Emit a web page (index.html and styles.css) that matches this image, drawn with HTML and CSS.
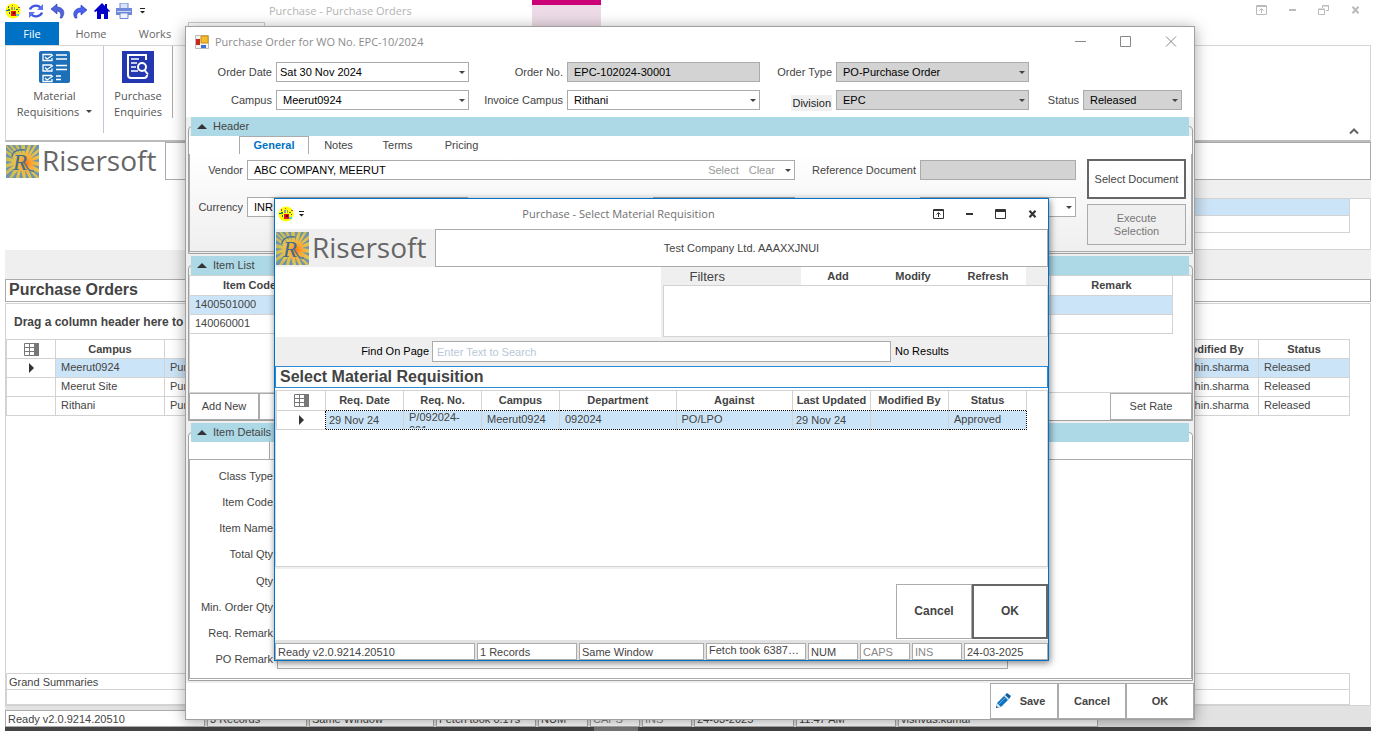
FILE: index.html
```html
<!DOCTYPE html>
<html lang="en">
<head>
<meta charset="utf-8">
<title>Purchase - Purchase Orders</title>
<link rel="stylesheet" href="styles.css">
</head>
<body>
<svg class="defs" aria-hidden="true">
  <radialGradient id="sun" cx="62%" cy="55%" r="62%">
    <stop offset="0" stop-color="#ff7a1c"/><stop offset=".3" stop-color="#f9ab3a"/><stop offset=".62" stop-color="#e3c44c"/><stop offset="1" stop-color="#c9bb58"/>
  </radialGradient>
  <symbol id="logo" viewBox="0 0 33 33">
    <rect width="33" height="33" fill="url(#sun)"/>
    <g fill="#6f93ad">
      <path d="M0 0h3l9 11zM6 0h3l5 9zM12 0h3l1 9zM19 0h3l-3 9zM25 0h3l-6 10zM31 0h2v3l-9 8zM33 7v3l-8 3zM33 14v3l-7-1zM33 21v3l-7-4zM33 28v4l-9-8zM30 33h-4l-4-9zM23 33h-3l-1-8zM17 33h-4l2-8zM10 33H6l6-8zM3 33H0v-3l9-7zM0 26v-3l8-3zM0 19v-3l7 1zM0 12V8l8 6zM0 5V2l9 9z"/>
    </g>
    <text x="7" y="25" class="logo-letter">R</text>
    <path d="M6 12c0-6 7-8 13-7M18 17c3 4 4 10 10 9" fill="none" stroke="#4c7391" stroke-width="1.4"/>
  </symbol>
  <symbol id="app" viewBox="0 0 16 16">
    <circle cx="8" cy="8" r="7.6" fill="#ff0"/>
    <path d="M6 8h5v5H6z" fill="#e01818"/><path d="M6 4h2v3H6zM9 4h1v3H9z" fill="#999"/>
    <path d="M1 7h2v1H1zM3 4h1v1H3zM4 9h1v2H4zM13 8h1v1h-1z" fill="#1656c8"/>
    <path d="M13 4h2v1h-2zM3 3h1v1H3zM7 2h1v1H7z" fill="#d33"/>
    <path d="M3 6h2v2H3zM11 6h2v1h-2z" fill="#2a8a3a"/><path d="M11 11h3v2h-3z" fill="#4bd0e8"/><path d="M8 9h2v2H8z" fill="#700"/>
  </symbol>
  <symbol id="qat" viewBox="0 0 5 6"><path d="M0 0h5v1H0zM0 3h5L2.500 5.500z" fill="#222"/></symbol>
  <symbol id="pin" viewBox="0 0 11 10"><path d="M.5.500h10v9H.5zM0 1.500h11M5.500 8V4M3.500 5.500l2-2 2 2" fill="none" stroke="currentColor"/></symbol>
  <symbol id="cross" viewBox="0 0 9 8"><path d="M1.500.800l6 6.400M7.500.800l-6 6.400" stroke="currentColor" stroke-width="2.100" fill="none"/></symbol>
  <symbol id="chooser" viewBox="0 0 15 13"><path d="M.5.500h10v12H.5zM0 4.500h10M0 8.500h10M5.500 0v13" fill="none" stroke="#777"/><path d="M10 0h5v13h-5z" fill="#777"/></symbol>
</svg>

<div class="desktop">
  <main class="app">
    <header class="app-title">
      <div class="qat">
        <svg class="qat-app" width="16" height="16"><use href="#app"/></svg>
        <svg width="16" height="16" viewBox="0 0 16 16" fill="none" stroke="#3f55e0" stroke-width="2.400"><path d="M2 6.500C3 3 9 1 12.500 4.500M14 9.500C13 13 7 15 3.500 11.500"/><path d="M15 1v6H9zM1 15V9h6z" fill="#5d74ee" stroke="none"/></svg>
        <svg width="16" height="16" viewBox="0 0 16 16"><path d="M1 6l6-5v3c6 0 9 5 5 11h-2c2-4 0-7-3-7v3z" fill="#5264dc" stroke="#2434ac" stroke-width=".6"/></svg>
        <svg width="16" height="16" viewBox="0 0 16 16"><path d="M15 7L9 2v3C3 5 0 10 3 15h2C4 11 6 9 9 9v3z" fill="#4a60f0" stroke="#2434ac" stroke-width=".6"/></svg>
        <svg width="16" height="16" viewBox="0 0 16 16"><path d="M8 0L0 8l1 1 2-1v8h4v-5h3v5h4V8l1 1 1-1-3-3V1h-2v2z" fill="#0000c8"/></svg>
        <svg width="16" height="16" viewBox="0 0 16 16"><path d="M4 0h8v6H4z" fill="#d9e4fb" stroke="#6d86d8"/><path d="M0 5h16v7H0z" fill="#7088da"/><path d="M1 8h14v1H1z" fill="#c9d6f6"/><path d="M4 10h8v5.500H4z" fill="#eef3fd" stroke="#6d86d8"/></svg>
        <svg class="qat-more" width="5" height="6"><use href="#qat"/></svg>
      </div>
      <h1 class="caption">Purchase - Purchase Orders</h1>
      <div class="context-tab"></div>
      <div class="app-controls">
        <svg width="11" height="10"><use href="#pin"/></svg>
        <svg width="7" height="10"><path d="M0 4h7v2H0z" fill="currentColor"/></svg>
        <svg width="11" height="10" viewBox="0 0 11 10" fill="none" stroke="currentColor"><path d="M.5 4.500h6v5h-6zM0 4h7M4.500 3V.500h6v5H8M4 1h7"/></svg>
        <svg width="9" height="8"><use href="#cross"/></svg>
      </div>
    </header>
    <nav class="ribbon-tabs">
      <button class="file-tab">File</button>
      <button>Home</button>
      <button>Works</button>
      <span class="ribbon-active"></span>
    </nav>
    <section class="ribbon">
      <button class="ribbon-item material">
        <svg width="31" height="32" viewBox="0 0 31 32"><rect width="31" height="32" rx="2" fill="#1d6fb8"/><g fill="none" stroke="#fff" stroke-width="1.300"><path d="M13 3.500H4v6h9V7M13 14H4v6h9v-2.500M13 24.500H4v6h9V28"/><path d="M6 6l2 2 6-4M6 16.500l2 2 6-4M6 27l2 2 6-4M17 4h11M17 8h11M17 14.500h11M17 18.500h11M17 25h5M17 28.500h5"/></g></svg>
        <span>Material<br>Requisitions <i class="caret"></i></span>
      </button>
      <button class="ribbon-item enquiries">
        <svg width="32" height="32" viewBox="0 0 32 32"><path d="M0 0h32v32H0z" fill="#2337b0"/><g fill="none" stroke="#fff" stroke-width="2"><path d="M24 9V4H6v20q0 3 3 3h13q3 0 3-3"/><path d="M9 8h8M9 12h6M9 16h5M9 20h7" stroke-width="1.500"/><circle cx="20" cy="16" r="4"/><path d="M22.500 19l3.500 4.500"/></g></svg>
        <span>Purchase<br>Enquiries</span>
      </button>
      <button class="ribbon-collapse" aria-label="Collapse ribbon"><svg width="10" height="7" viewBox="0 0 10 7"><path d="M1 5.500l4-4 4 4" fill="none" stroke="#666" stroke-width="2"/></svg></button>
    </section>
    <section class="brand">
      <div class="brand-logo"><svg width="33" height="33"><use href="#logo"/></svg><span>Risersoft</span></div>
      <div class="company"></div>
    </section>
    <section class="app-filters">
      <div class="blank"></div>
      <div class="filter-list"><div class="filter-row selected"></div><div class="filter-row"></div></div>
    </section>
    <h2 class="view-title">Purchase Orders</h2>
    <section class="orders">
      <p class="group-hint">Drag a column header here to group by that column.</p>
      <table class="grid">
        <colgroup><col class="w-49"><col class="w-109"><col><col class="w-92"><col class="w-91"></colgroup>
        <thead><tr><th><svg width="15" height="13"><use href="#chooser"/></svg></th><th>Campus</th><th></th><th>Modified By</th><th>Status</th></tr></thead>
        <tbody>
          <tr class="current"><td class="mark"><i></i></td><td>Meerut0924</td><td>Purchase</td><td class="user">sachin.sharma</td><td>Released</td></tr>
          <tr><td></td><td>Meerut Site</td><td>Purchase</td><td class="user">sachin.sharma</td><td>Released</td></tr>
          <tr><td></td><td>Rithani</td><td>Purchase</td><td class="user">sachin.sharma</td><td>Released</td></tr>
        </tbody>
      </table>
      <div class="summaries"><div>Grand Summaries</div><div></div></div>
    </section>
    <footer class="statusbar">
      <span class="w-200">Ready v2.0.9214.20510</span><span class="w-100">3 Records</span><span class="w-125">Same Window</span><span class="w-100">Fetch took 0.17s</span><span class="w-50">NUM</span><span class="w-50 off">CAPS</span><span class="w-50 off">INS</span><span class="w-100">24-03-2025</span><span class="w-100">11:47 AM</span><span class="w-200">vishvas.kumar</span>
    </footer>
    <div class="taskbar"><span></span></div>
  </main>

  <section class="window order-window">
    <header class="order-title">
      <svg width="14" height="14" viewBox="0 0 14 14"><path d="M.5.500h13v13H.5z" fill="#f4f4f4" stroke="#bbb"/><path d="M1 4h4v6H1z" fill="#c8281c"/><path d="M6 1h7v7H6z" fill="#f5bd2e" stroke="#c98d0c"/><path d="M6 10h5v3H6z" fill="#3d6fd6"/></svg>
      <h2 class="caption">Purchase Order for WO No. EPC-10/2024</h2>
      <div class="order-controls">
        <svg width="11" height="12"><path d="M0 5.500h11" stroke="currentColor"/></svg>
        <svg width="11" height="12" fill="none"><path d="M.5.500h10v10H.5z" stroke="currentColor"/></svg>
        <svg width="12" height="12"><path d="M1 .5l10 10M11 .5L1 10.500" stroke="currentColor"/></svg>
      </div>
    </header>
    <form class="order-head">
      <label for="odate">Order Date</label><span class="drop tight"><select id="odate"><option>Sat 30 Nov 2024</option></select></span>
      <label for="ono">Order No.</label><input id="ono" class="ro" value="EPC-102024-30001" readonly>
      <label for="otype">Order Type</label><span class="drop"><select id="otype" class="ro"><option>PO-Purchase Order</option></select></span>
      <i></i><i></i>
      <label for="campus">Campus</label><span class="drop"><select id="campus"><option>Meerut0924</option></select></span>
      <label for="icampus">Invoice Campus</label><span class="drop"><select id="icampus"><option>Rithani</option></select></span>
      <label for="division" class="plain"><span>Division</span></label><span class="drop"><select id="division" class="ro"><option>EPC</option></select></span>
      <label for="status">Status</label><span class="drop"><select id="status" class="ro"><option>Released</option></select></span>
    </form>

    <section class="group head-group">
      <button class="group-bar"><i></i>Header</button>
      <div class="group-body">
        <nav class="tabs"><button class="active">General</button><button>Notes</button><button>Terms</button><button>Pricing</button></nav>
        <div class="page general">
          <form class="fields">
            <label for="vendor">Vendor</label>
            <div class="vendor"><input id="vendor" value="ABC COMPANY, MEERUT"><a href="#">Select</a><a href="#">Clear</a><i class="caret"></i></div>
            <label for="refdoc">Reference Document</label><input id="refdoc" class="ro" readonly>
            <label for="currency">Currency</label><span class="drop"><select id="currency"><option>INR</option></select></span>
            <i></i><input class="ro" aria-label="Rate" readonly><i></i><span class="drop"><select aria-label="Terms"><option></option></select></span>
          </form>
          <div class="doc-buttons"><button class="btn primary">Select Document</button><button class="btn dim">Execute Selection</button></div>
        </div>
      </div>
    </section>

    <section class="group list-group">
      <button class="group-bar"><i></i>Item List</button>
      <div class="group-body">
        <div class="list">
          <table class="grid">
            <colgroup><col class="w-120"><col><col class="w-122"></colgroup>
            <thead><tr><th>Item Code</th><th></th><th>Remark</th></tr></thead>
            <tbody><tr class="current"><td>1400501000</td><td></td><td></td></tr><tr><td>140060001</td><td></td><td></td></tr></tbody>
          </table>
        </div>
        <div class="list-actions"><button class="btn add">Add New</button><button class="btn del">Delete</button><button class="btn rate">Set Rate</button></div>
      </div>
    </section>

    <section class="group detail-group">
      <button class="group-bar"><i></i>Item Details</button>
      <div class="group-body">
        <div class="detail-tab"></div>
        <form class="page details">
          <label for="d1">Class Type</label><input id="d1">
          <label for="d2">Item Code</label><input id="d2">
          <label for="d3">Item Name</label><input id="d3">
          <label for="d4">Total Qty</label><input id="d4">
          <label for="d5">Qty</label><input id="d5">
          <label for="d6">Min. Order Qty</label><input id="d6">
          <label for="d7">Req. Remark</label><input id="d7">
          <label for="d8">PO Remark</label><input id="d8">
        </form>
      </div>
    </section>

    <footer class="order-actions">
      <button class="btn save"><svg width="16" height="16" viewBox="0 0 16 16"><path d="M1 15l1-5 8-8 4 4-8 8z" fill="#1173bd"/><path d="M10 2l2-2 4 3-2 3z" fill="#0f5d9c"/><path d="M9 3l1-1 4 4-1 1zM1 15l1-5 4 4z" fill="#dceaf5"/><path d="M1 15l.5-2 1.500 1.500z" fill="#123"/><path d="M4 11l7-7" stroke="#69b1e4"/></svg>Save</button><button class="btn">Cancel</button><button class="btn">OK</button>
    </footer>
  </section>

  <section class="window pick-window">
    <header class="pick-title">
      <svg width="16" height="16"><use href="#app"/></svg>
      <svg class="qat-more" width="5" height="6"><use href="#qat"/></svg>
      <h2 class="caption">Purchase - Select Material Requisition</h2>
      <div class="pick-controls">
        <svg width="11" height="10"><use href="#pin"/></svg>
        <svg width="7" height="10"><path d="M0 4h7v2H0z" fill="currentColor"/></svg>
        <svg width="11" height="10" fill="none" stroke="currentColor"><path d="M.5.500h10v9H.5zM0 1.500h11M0 2.500h11"/></svg>
        <svg width="9" height="8"><use href="#cross"/></svg>
      </div>
    </header>
    <section class="brand">
      <div class="brand-logo"><svg width="33" height="33"><use href="#logo"/></svg><span>Risersoft</span></div>
      <div class="company">Test Company Ltd. AAAXXJNUI</div>
    </section>
    <section class="pick-filters">
      <div class="blank"></div>
      <div class="filter-side">
        <div class="filter-bar"><span>Filters</span><button>Add</button><button>Modify</button><button>Refresh</button></div>
        <div class="filter-box"></div>
      </div>
    </section>
    <div class="find"><label for="find">Find On Page</label><input id="find" placeholder="Enter Text to Search"><span>No Results</span></div>
    <h2 class="view-title">Select Material Requisition</h2>
    <section class="pick-grid">
      <table class="grid">
        <colgroup><col class="w-49"><col class="w-78"><col class="w-78"><col class="w-78"><col><col><col class="w-78"><col class="w-78"><col class="w-78"></colgroup>
        <thead><tr><th><svg width="15" height="13"><use href="#chooser"/></svg></th><th>Req. Date</th><th>Req. No.</th><th>Campus</th><th>Department</th><th>Against</th><th>Last Updated</th><th>Modified By</th><th>Status</th></tr></thead>
        <tbody><tr class="current focus"><td class="mark"><i></i></td><td class="date first">29 Nov 24</td><td><div class="wrap">P/092024-<br>001</div></td><td>Meerut0924</td><td>092024</td><td>PO/LPO</td><td class="date">29 Nov 24</td><td></td><td>Approved</td></tr></tbody>
      </table>
    </section>
    <div class="pick-actions"><button class="btn">Cancel</button><button class="btn primary">OK</button></div>
    <footer class="statusbar">
      <span class="w-200">Ready v2.0.9214.20510</span><span class="w-100">1 Records</span><span class="w-125">Same Window</span><span class="w-100 raised">Fetch took 6387…</span><span class="w-50">NUM</span><span class="w-50 off">CAPS</span><span class="w-50 off">INS</span><span class="rest">24-03-2025</span>
    </footer>
  </section>
</div>
</body>
</html>
```

FILE: styles.css
```css
* { box-sizing: border-box; }
body { margin: 0; background: #fff; color: #444; font: 11px/13px "Liberation Sans", Arial, sans-serif; }
h1, h2, p { margin: 0; }
button, input, select { font: inherit; color: inherit; margin: 0; border-radius: 0; }
button { background: none; border: 0; padding: 0; }
a { color: #999; text-decoration: none; }
svg { display: block; flex: none; }
.defs { position: absolute; width: 0; height: 0; }
.logo-letter { font: italic 23px "Liberation Serif", serif; fill: #3f6d90; }

.desktop { position: relative; min-height: 100vh; overflow: hidden; }
.caption { font: 11px/16px "Open Sans", "Noto Sans", sans-serif; color: #8c8c8c; white-space: nowrap; }
.caret { display: inline-block; border: 3px solid transparent; border-top-color: #444; border-bottom: 0; }

/* main application window */
.app { display: flex; flex-direction: column; min-height: 100vh; padding: 0 10px 0 5px; }
.app-title { display: flex; height: 22px; align-items: center; }
.qat { display: flex; gap: 6px; align-items: center; width: 264px; }
.qat-app { margin-right: 1px; }
.qat .qat-more { margin-left: 2px; }
.app-title .caption { width: 263px; color: #b4b4b4; }
.context-tab { align-self: flex-start; width: 69px; height: 26px; margin-bottom: -4px; background: #ecdbe6; border-top: 5px solid #cc0077; }
.app-controls { display: flex; align-items: center; gap: 22px; margin: 0 11px 2px auto; color: #bbb; }
.ribbon-tabs { display: flex; height: 23px; font: 11px/23px "Open Sans", "Noto Sans", sans-serif; color: #666; }
.ribbon-tabs button { width: 64px; }
.ribbon-tabs .file-tab { width: 54px; background: #0072c6; color: #fff; }
.ribbon-active { width: 77px; margin-left: 1px; border: 1px solid #ccc; border-bottom: 0; }
.ribbon { display: flex; height: 97px; border: 1px solid #d5d5d5; border-bottom: 2px solid #bbb; align-items: flex-start; }
.ribbon-item { display: flex; flex-direction: column; align-items: center; gap: 5px; padding-top: 5px; font: 11px/16px "Open Sans", "Noto Sans", sans-serif; color: #555; white-space: nowrap; }
.ribbon-item .caret { margin: 0 0 3px 4px; }
.material { width: 98px; border-right: 1px solid #c5c5d8; height: 87px; }
.enquiries { width: 69px; border-right: 1px solid #aaa; height: 72px; }
.ribbon-collapse { margin: 82px 11px 0 auto; }
.brand { display: flex; height: 38px; }
.brand-logo { display: flex; align-items: center; gap: 3px; width: 160px; padding-left: 1px; color: #666; font: 28px/32px "Open Sans", sans-serif; white-space: nowrap; }
.brand-logo span { margin-top: -3px; }
.company { flex: 1; display: flex; align-items: center; justify-content: center; border: 1px solid #ababab; }
.app-filters { display: flex; height: 99px; background: #efefef; }
.blank { flex: 1; background: #fff; }
.app-filters .blank { height: 70px; }
.filter-list { flex: 1; height: 52px; margin-top: 18px; border: 1px solid #d3d3d3; background: #fff; padding-right: 20px; }
.filter-row { height: 17px; border: 1px solid #d3d3d3; border-top: 0; border-left: 0; }
.filter-row.selected, .grid .current td { background: #cce4f7; }
.view-title { height: 23px; border: 1px solid #ababab; padding-left: 3px; font: bold 16px/20px "Liberation Sans", Arial, sans-serif; }
.orders { flex: 1; display: flex; flex-direction: column; margin-top: 1px; border: 1px solid #d3d3d3; }
.group-hint { padding: 12px 8px 10px; font-weight: bold; font-size: 12px; line-height: 13px; }
.orders .grid { width: calc(100% - 20px); }
.summaries { margin: auto 20px 0 0; border: 1px solid #d3d3d3; }
.summaries div { height: 15px; padding-left: 2px; line-height: 16px; }
.summaries div + div { border-top: 1px solid #d3d3d3; }
.statusbar { display: flex; gap: 2px; height: 21px; padding-top: 4px; background: #e2e2e2; white-space: nowrap; }
.statusbar span { border: 1px solid #ababab; background: #fff; padding-left: 2px; line-height: 16px; overflow: hidden; }
.statusbar .off { color: #888; }
.statusbar .rest { flex: 1; }
.statusbar .raised { line-height: 13px; }
.taskbar { display: flex; height: 4px; background: #444; }
.taskbar span { width: 44px; margin-left: 589px; background: #777; }

.w-49 { width: 49px; } .w-50 { width: 50px; } .w-78 { width: 78px; } .w-91 { width: 91px; } .w-92 { width: 92px; }
.w-100 { width: 100px; } .w-109 { width: 109px; } .w-120 { width: 120px; } .w-122 { width: 122px; } .w-125 { width: 125px; } .w-200 { width: 200px; }

/* grids */
.grid { width: 100%; border-collapse: collapse; table-layout: fixed; }
.grid th, .grid td { height: 19px; border: 1px solid #d3d3d3; padding: 0; overflow: hidden; white-space: nowrap; }
.grid td { padding: 0 0 1px 5px; text-align: left; }
.grid td.user { padding: 0 9px 1px 0; text-align: right; }
.grid th svg { margin: 0 auto; }
.grid td.mark { background: #fff; padding: 0; }
.mark i { display: block; width: 0; margin: 0 auto; border: 5px solid transparent; border-left-color: #333; border-right: 0; }
.grid td.date { padding: 1px 0 0 3px; }
.wrap { height: 17px; line-height: 13px; white-space: normal; overflow: hidden; }

/* floating windows */
.window { position: absolute; display: flex; flex-direction: column; background: #fff; }
.order-window { inset: 26px 186px 11px 185px; border: 1px solid #a0a0a0; box-shadow: 0 2px 14px rgba(0, 0, 0, .35); }
.order-title { display: flex; align-items: center; gap: 6px; height: 30px; padding-left: 9px; }
.order-controls { display: flex; gap: 34px; margin: 0 17px 0 auto; color: #888; }
.order-head { display: grid; grid-template-columns: 86px 1fr 98px 1fr 76px 1fr 54px 99px; row-gap: 8px; grid-auto-rows: 20px; padding: 5px 12px 7px 4px; align-items: center; }
label { text-align: right; padding-right: 4px; white-space: nowrap; }
.order-head input, .order-head select, .fields input, .fields select { width: 100%; height: 20px; border: 1px solid #ababab; background: #fff; color: #000; padding: 0 6px; appearance: none; outline: 0; display: block; }
.order-head .ro, .fields .ro { background: #d3d3d3; }
.order-head .tight select { padding-left: 3px; }
.drop { position: relative; display: block; }
.drop::after { content: ""; position: absolute; right: 4px; top: 9px; border: 3px solid transparent; border-top-color: #444; border-bottom: 0; }
.plain { color: #222; align-self: end; }
.plain span { background: #efefef; padding: 2px 1px; }

.group { position: relative; display: flex; flex-direction: column; padding: 0 1px 2px 2px; background: #efefef; }
.group-bar { position: relative; display: flex; align-items: center; gap: 6px; height: 19px; margin: 0 4px 0 3px; padding-left: 6px; background: #add8e6; color: #444; }
.group-bar i { border: 5px solid transparent; border-bottom-color: #333; border-top: 0; }
.group-body { flex: 1; display: flex; flex-direction: column; margin-top: -10px; padding: 9px 0 0; border: 1px solid #a0a0a0; border-radius: 4px 4px 0 0; }
.head-group .group-body, .detail-group .group-body { padding-bottom: 1px; }
.tabs { display: flex; height: 18px; margin-bottom: -1px; padding-left: 50px; background: #fff; position: relative; }
.tabs button { width: 59px; }
.tabs .active { width: 70px; border: 1px solid #ababab; border-bottom: 0; background: #fff; color: #0072c6; font-weight: bold; }
.tabs button:last-child { width: 69px; }
.page { flex: 1; border: 1px solid #ababab; background: #fff; }
.head-group { height: 139px; }
.general { display: flex; gap: 11px; padding: 5px 5px 0 0; background: linear-gradient(#fff, #efefef); }
.fields { flex: 1; display: grid; grid-template-columns: 57px 221fr 185fr 142fr 125px 156fr; grid-auto-rows: 20px; row-gap: 17px; padding-top: 1px; align-items: center; }
.vendor { grid-column: 2 / 5; display: flex; align-items: center; gap: 10px; height: 20px; padding-right: 3px; border: 1px solid #ababab; background: #fff; }
.fields .vendor input { flex: 1; width: 0; height: 18px; border: 0; }
.doc-buttons { width: 99px; display: flex; flex-direction: column; gap: 5px; }
.btn { border: 1px solid #ababab; background: #fff; }
.btn.primary { border: 2px solid #666; }
.doc-buttons .primary { height: 40px; }
.doc-buttons .dim { height: 41px; padding: 0 22px; background: #efefef; color: #777; }

.list-group { height: 167px; }
.list { flex: 1; background: #fff; border: 1px solid #d3d3d3; padding-right: 17px; }
.list .grid { margin: -1px 0 0 -1px; }
.list .grid th { height: 20px; }
.list-actions { display: flex; height: 27px; background: #fff; }
.add, .del { width: 70px; } .rate { width: 82px; margin-left: auto; }

.detail-group { flex: 1; }
.detail-tab { width: 81px; height: 17px; background: #fff; border-right: 1px solid #ababab; }
.detail-group .group-body { background: #fff; }
.details { display: grid; grid-template-columns: 87px 730fr 183fr; grid-auto-rows: 1fr; align-items: center; padding: 3px 0 5px; }
.details label { grid-column: 1; }
.details input { height: 18px; border: 1px solid #ababab; }
.order-actions { display: flex; justify-content: flex-end; height: 36px; font-weight: bold; }
.order-actions .btn { width: 68px; display: flex; align-items: center; justify-content: center; gap: 9px; }
.order-actions .save { padding-right: 8px; }

/* requisition picker */
.pick-window { inset: 198px 332px 70px 274px; border: 1px solid #0072c6; box-shadow: 1px 2px 7px rgba(0, 0, 0, .5); }
.pick-title { display: flex; align-items: center; height: 30px; padding-left: 3px; }
.pick-title .qat-more { margin-left: 5px; }
.pick-title .caption { flex: 1; text-align: center; color: #707070; }
.pick-controls { display: flex; align-items: center; gap: 22px; margin-right: 11px; color: #333; }
.pick-window .brand-logo { background: #efefef; }
.pick-window .company { background: #fff; }
.pick-filters { display: flex; height: 70px; }
.filter-side { flex: 1; background: #efefef; padding-left: 2px; }
.filter-bar { display: flex; height: 18px; }
.filter-bar span { width: 138px; padding-left: 27px; font-size: 13px; line-height: 19px; }
.filter-bar button { width: 75px; background: #fff; font-weight: bold; }
.filter-box { height: 52px; border: 1px solid #d3d3d3; background: #fff; }
.find { display: flex; align-items: center; height: 29px; background: #efefef; color: #000; }
.find label { width: 157px; padding-right: 3px; }
.find input { flex: 1; height: 21px; border: 1px solid #ababab; background: #fff; padding: 0 4px; }
.find input::placeholder { color: #b8c8d8; }
.find span { padding-left: 4px; width: 157px; }
.pick-window .view-title { border-color: #2b8ad6; height: 22px; padding-left: 4px; }
.pick-grid { flex: 1; margin-top: 2px; border: 1px solid #d3d3d3; padding-right: 20px; }
.pick-grid .grid th { border-top: 0; border-bottom: 0; }
.focus td:not(.mark) { border-top: 1px dotted #000; border-bottom: 1px dotted #000; }
.focus td.mark { border-right: 0; }
.focus td.first { border-left: 1px dotted #000; }
.focus td:last-child { border-right: 1px dotted #000; }
.pick-actions { display: flex; justify-content: flex-end; height: 73px; padding-top: 15px; border-top: 2px solid #efefef; font-weight: bold; font-size: 12px; }
.pick-actions .btn { width: 76px; height: 55px; }
.pick-window .statusbar { height: 20px; padding-top: 3px; }
```
